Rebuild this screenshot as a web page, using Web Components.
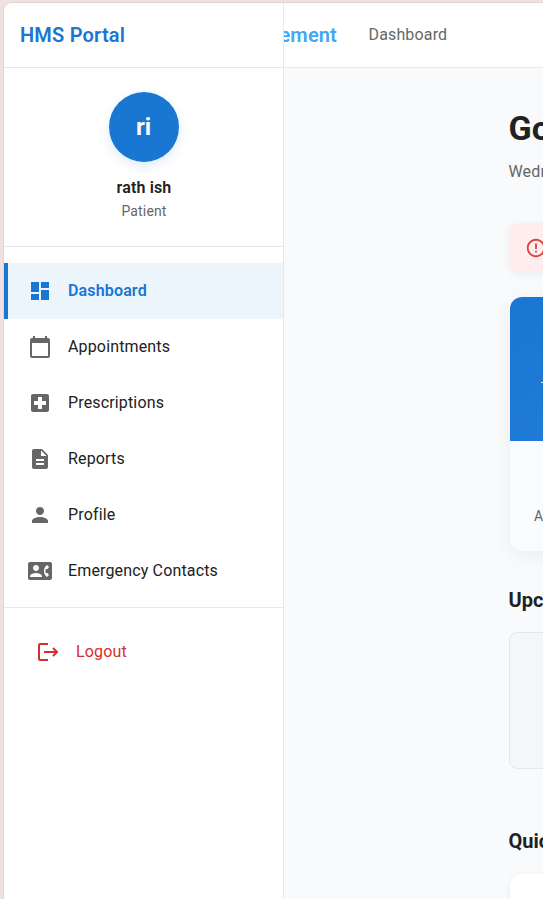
<!DOCTYPE html>
<html lang="en"><head><meta charset="utf-8"><title>HMS Portal</title>
<style>html,body{margin:0;height:100%;overflow:hidden}body{background:#f1e1e0;font-family:Roboto,"Liberation Sans",sans-serif;color:#212121}</style>
</head><body><hms-app></hms-app>
<script>
const define=(name,css,html)=>customElements.define(name,class extends HTMLElement{
  constructor(){super();this.attachShadow({mode:'open'}).innerHTML=`<style>*{box-sizing:border-box}${css}</style>`+(typeof html==='function'?html(this):html);}
});
const icons={
 dashboard:'M3 13h8V3H3v10zm0 8h8v-6H3v6zm10 0h8V11h-8v10zm0-18v6h8V3h-8z',
 calendar:'M20 3h-1V1h-2v2H7V1H5v2H4c-1.1 0-2 .9-2 2v16c0 1.100.9 2 2 2h16c1.100 0 2-.9 2-2V5c0-1.100-.9-2-2-2zm0 18H4V8h16v13z',
 hospital:'M19 3H5c-1.100 0-1.990.9-1.990 2L3 19c0 1.100.9 2 2 2h14c1.100 0 2-.9 2-2V5c0-1.100-.9-2-2-2zm-1 11h-4v4h-4v-4H6v-4h4V6h4v4h4v4z',
 file:'M14 2H6c-1.100 0-1.990.9-1.990 2L4 20c0 1.100.890 2 1.990 2H18c1.100 0 2-.9 2-2V8l-6-6zm2 16H8v-2h8v2zm0-4H8v-2h8v2zm-3-5V3.500L18.500 9H13z',
 person:'M12 12c2.210 0 4-1.790 4-4s-1.790-4-4-4-4 1.790-4 4 1.790 4 4 4zm0 2c-2.670 0-8 1.340-8 4v2h16v-2c0-2.660-5.330-4-8-4z',
 contact:'M22 3H2C.9 3 0 3.900 0 5v14c0 1.100.9 2 2 2h20c1.100 0 1.990-.9 1.990-2L24 5c0-1.100-.9-2-2-2zM8 6c1.660 0 3 1.340 3 3s-1.340 3-3 3-3-1.340-3-3 1.340-3 3-3zm6 12H2v-1c0-2 4-3.100 6-3.100s6 1.100 6 3.100v1zm3.850-4h1.640L21 16l-1.990 1.990c-1.310-.980-2.280-2.380-2.730-3.990-.180-.640-.280-1.310-.280-2s.1-1.360.280-2c.450-1.620 1.420-3.010 2.730-3.990L21 8l-1.510 2h-1.640c-.220.630-.350 1.300-.350 2s.130 1.370.350 2z',
 error:'M11 15h2v2h-2zm0-8h2v6h-2zm.99-5C6.470 2 2 6.480 2 12s4.470 10 9.990 10C17.520 22 22 17.520 22 12S17.520 2 11.990 2zM12 20c-4.420 0-8-3.580-8-8s3.580-8 8-8 8 3.580 8 8-3.580 8-8 8z'
};
define('hms-icon',':host{display:block;width:24px;height:24px;flex:none}svg{display:block;width:100%;height:100%}',el=>
 el.getAttribute('name')==='logout'
 ?'<svg viewBox="0 0 24 24" fill="none" stroke="currentColor" stroke-width="2"><path d="M12 4H4a1 1 0 0 0-1 1v14a1 1 0 0 0 1 1h8M8 12h13M17 8l4 4-4 4"/></svg>'
 :`<svg viewBox="0 0 24 24" fill="currentColor"><path d="${icons[el.getAttribute('name')]}"/></svg>`);
define('hms-nav-item',`:host{display:flex;align-items:center;gap:16px;height:56px;padding-left:24px;font-size:16px;line-height:24px;letter-spacing:.15px}
 hms-icon{color:#666}
 :host([active]){background:#ecf4fc;border-left:4px solid #1976d2;padding-left:20px;color:#1976d2;font-weight:600;letter-spacing:.15px}
 :host([active]) hms-icon{color:#1976d2}
 :host([danger]){padding-left:32px;color:#d32f2f}:host([danger]) hms-icon{color:#d32f2f}`,
 el=>`<hms-icon name="${el.getAttribute('icon')}"></hms-icon><span><slot></slot></span>`);
define('hms-profile',`:host{display:flex;flex-direction:column;align-items:center;height:179px;padding-top:24px;border-bottom:1px solid #e8e8e8}
 .avatar{width:70px;height:70px;border-radius:50%;background:#1976d2;color:#fff;display:grid;place-items:center;font-size:24px;font-weight:700;box-shadow:0 4px 12px #1976d226}
 .name{margin:14px 0 0 1px;font-size:16px;line-height:24px;font-weight:600;letter-spacing:.15px}.role{margin:1px 0 0 1px;font-size:14px;line-height:21px;color:#666;letter-spacing:.15px}`,
 '<div class="avatar">ri</div><div class="name">rath ish</div><div class="role">Patient</div>');
define('hms-sidebar',`:host{display:block;width:280px;flex:none;background:#fff;border-right:1px solid #e8e8e8}
 .title{height:65px;padding-left:16px;border-bottom:1px solid #e8e8e8;font-size:20px;line-height:64px;font-weight:600;color:#1976d2;letter-spacing:.2px}
 nav{padding:16px 0 8px;border-bottom:1px solid #e8e8e8}.exit{padding-top:16px}`,
 `<div class="title">HMS Portal</div><hms-profile></hms-profile><nav>
 <hms-nav-item icon="dashboard" active>Dashboard</hms-nav-item><hms-nav-item icon="calendar">Appointments</hms-nav-item>
 <hms-nav-item icon="hospital">Prescriptions</hms-nav-item><hms-nav-item icon="file">Reports</hms-nav-item>
 <hms-nav-item icon="person">Profile</hms-nav-item><hms-nav-item icon="contact">Emergency Contacts</hms-nav-item></nav>
 <div class="exit"><hms-nav-item icon="logout" danger>Logout</hms-nav-item></div>`);
define('hms-topbar',`:host{display:flex;height:65px;background:#fff;border-bottom:1px solid #e8e8e8;line-height:64px;white-space:nowrap}
 .brand{width:53px;display:flex;justify-content:flex-end;overflow:hidden;font-size:20px;font-weight:600;color:#42a5f5;letter-spacing:.15px}
 .page{margin-left:31.500px;font-size:16px;line-height:63px;color:#666;letter-spacing:.15px}`,
 '<div class="brand"><span>ement</span></div><div class="page">Dashboard</div>');
define('hms-alert',`:host{display:block;height:49px;padding:13px 14px;border-radius:8px;background:#ffeded;color:#d94343;box-shadow:0 2px 10px #0000000f}hms-icon{width:22px;height:22px;margin:1px}`,
 '<hms-icon name="error"></hms-icon>');
define('hms-summary',`:host{display:block;height:254px;border-radius:12px;overflow:hidden;background:#f8fcff;box-shadow:0 4px 20px #0000000f}
 .top{height:144px;padding:85px 0 0 31px;background:linear-gradient(150deg,#1976d2,#2882df)}i{display:block;width:20px;height:1px;background:#fffc}
 p{margin:65px 0 0 24px;font-size:14px;line-height:21px;color:#666}`,
 '<div class="top"><i></i></div><p>Appointments</p>');
define('hms-content',`:host{display:block;width:400px;margin-left:225px;padding-top:39px;white-space:nowrap}
 h1,h2,.date{text-indent:-.5px}
 h1{margin:0;font-size:34px;line-height:42px;font-weight:700}
 .date{margin-top:11px;font-size:16px;line-height:24px;color:#666;letter-spacing:.15px}
 hms-alert{margin:39px 0 0 1px}hms-summary{margin:25px 0 0 1px}
 h2{margin:34px 0 17px;font-size:20px;line-height:30px;font-weight:700}
 .empty{height:137px;border:1px solid #e5e7e9;border-radius:8px;background:#f5f6f8}
 h2.quick{margin:57px 0 18px}.card{height:150px;margin-left:1px;border-radius:12px;background:#fff;box-shadow:0 1px 6px #00000010}`,
 `<h1>Good</h1><div class="date">Wednesday</div><hms-alert></hms-alert><hms-summary></hms-summary><h2>Upcoming</h2><div class="empty"></div><h2 class="quick">Quick</h2><div class="card"></div>`);
define('hms-app',`:host{display:block;height:100vh;padding:3px 0 0 4px}
 .frame{display:flex;height:100%;overflow:hidden;border-radius:8px 0 0;background:#f9fafc;box-shadow:0 0 2px #0000002e}main{flex:1;min-width:0;overflow:hidden}`,
 '<div class="frame"><hms-sidebar></hms-sidebar><main><hms-topbar></hms-topbar><hms-content></hms-content></main></div>');
</script></body></html>
